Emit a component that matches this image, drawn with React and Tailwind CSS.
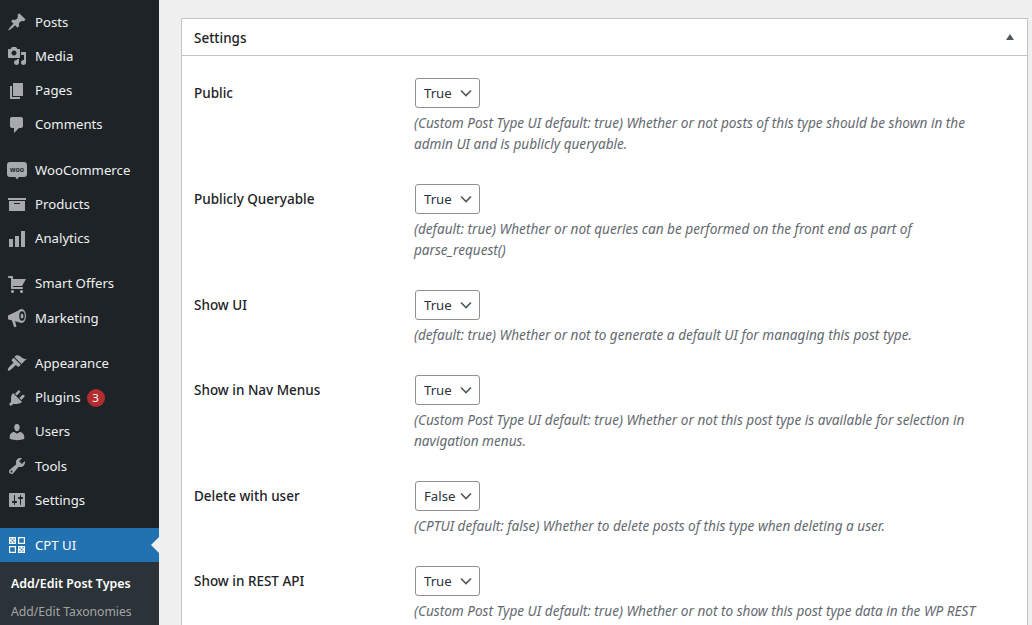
import React from "react";

const Dash = ({ d }) => (
  <svg viewBox="0 0 20 20" className="w-5 h-5 shrink-0 fill-[#a7aaad]">
    <path d={d} />
  </svg>
);

const WooIcon = () => (
  <svg viewBox="0 0 20 20" className="w-5 h-5 shrink-0">
    <path
      className="fill-[#a7aaad]"
      d="M2.800 2h14.400C18.800 2 20 3.200 20 4.800v9.400c0 1.600-1.200 2.800-2.800 2.800h-5.400L10 19.600 8.400 17H2.800C1.200 17 0 15.800 0 14.200V4.800C0 3.200 1.200 2 2.800 2z"
    />
    <text x="10" y="12" textAnchor="middle" fontSize="8" fontWeight="700" fill="#1d2327" fontFamily="Liberation Sans, sans-serif" textLength="14" lengthAdjust="spacingAndGlyphs">
      woo
    </text>
  </svg>
);

const MegaphoneIcon = () => (
  <svg viewBox="0 0 20 20" className="w-5 h-5 shrink-0">
    <path className="fill-[#a7aaad]" d="M1 7.500L13.500 1.500v13L8 13.300l1.500 5.200-2.300.7L4.800 12.300 2 11.800c-.7-.1-1-.6-1-1.200z" />
    <ellipse cx="14.500" cy="8" rx="4.500" ry="7" className="fill-[#a7aaad]" />
    <ellipse cx="15" cy="8" rx="2.800" ry="4.800" className="fill-[#1d2327]" />
    <ellipse cx="15" cy="8" rx="1.400" ry="2.600" className="fill-[#a7aaad]" />
  </svg>
);

const CptIcon = () => (
  <svg viewBox="0 0 20 20" className="w-5 h-5 shrink-0">
    <path className="fill-white" fillRule="evenodd" d="M2 2h7v7H2zM3.300 3.300v1.300h1.300V3.300zm3 0v1.300h1.400V3.300zM4.800 4.800v1.400h1.400V4.800zM3.300 6.400v1.300h1.300V6.400zm3 0v1.300h1.400V6.400z" />
    <path className="fill-white" fillRule="evenodd" d="M11 2h7v7h-7zm1.200 1.200v4.600h4.600V3.200z" />
    <path className="fill-white" fillRule="evenodd" d="M2 11h7v7H2zm1.200 1.200v4.600h4.600v-4.600z" />
    <path className="fill-white" fillRule="evenodd" d="M11 11h7v7h-7zm1.300 1.300v1.300h1.300v-1.300zm3 0v1.300h1.400v-1.300zm-1.500 1.500v1.400h1.400v-1.400zm-1.500 1.600v1.300h1.300v-1.300zm3 0v1.300h1.400v-1.300z" />
  </svg>
);

const paths = {
  posts: "M10.44 3.02l1.82-1.82 6.36 6.35-1.83 1.82c-1.05-.68-2.48-.57-3.41.36l-.75.75c-.92.93-1.04 2.35-.35 3.41l-1.83 1.82-2.41-2.41-2.8 2.79c-.42.42-3.38 2.71-3.8 2.29s1.86-3.39 2.28-3.81l2.79-2.79L4.100 9.360l1.830-1.820c1.050.69 2.480.57 3.400-.36l.75-.75c.93-.92 1.050-2.350.36-3.410z",
  media: "M13 11V4c0-.55-.45-1-1-1h-1.670L9 1H5L3.670 3H2c-.55 0-1 .45-1 1v7c0 .55.45 1 1 1h10c.55 0 1-.45 1-1zM7 4.500c1.380 0 2.500 1.120 2.500 2.500S8.380 9.500 7 9.500 4.500 8.380 4.500 7 5.620 4.500 7 4.500zM14 6h5v10.500c0 1.380-1.120 2.500-2.500 2.500S14 17.880 14 16.500s1.120-2.500 2.500-2.500c.17 0 .34.02.5.05V9h-3V6zm-4 8.050V13h2v3.500c0 1.380-1.120 2.500-2.500 2.500S7 17.880 7 16.500 8.120 14 9.500 14c.17 0 .34.02.5.05z",
  pages: "M6 15V2h10v13H6zm-1 1h8v2H3V5h2v11z",
  comments: "M5 2h9c1.100 0 2 .9 2 2v7c0 1.100-.9 2-2 2h-2l-5 5v-5H5c-1.100 0-2-.9-2-2V4c0-1.100.9-2 2-2z",
  products: "M19 4v2H1V4h18zM2 7h16v10H2V7zm11 3V9H7v1h6z",
  analytics: "M18 18V2h-4v16h4zm-6 0V7H8v11h4zm-6 0v-8H2v8h4z",
  cart: "M6 13h9c.55 0 1 .45 1 1s-.45 1-1 1H5c-.55 0-1-.45-1-1V4H2c-.55 0-1-.45-1-1s.45-1 1-1h3c.55 0 1 .45 1 1v2h13l-4 7H6v1zm-.5 3c.83 0 1.500.67 1.500 1.500S6.330 19 5.500 19 4 18.330 4 17.500 4.670 16 5.500 16zm9 0c.83 0 1.500.67 1.500 1.500s-.67 1.500-1.500 1.500-1.500-.67-1.500-1.500.67-1.500 1.500-1.500z",
  appearance: "M14.480 11.060L7.410 3.990l1.500-1.500c.5-.56 2.300-.47 3.510.32 1.210.8 1.430 1.280 2.910 2.100 1.180.64 2.450 1.260 4.450.85zm-.71.71L6.700 4.700 4.930 6.470c-.39.39-.39 1.020 0 1.410l1.060 1.060c.39.39.39 1.030 0 1.420-.6.6-6.480 5.610-4.970 7.110 1.500 1.510 6.510-4.370 7.110-4.970.39-.39 1.020-.39 1.410 0l1.060 1.060c.39.39 1.020.39 1.410 0z",
  plugins: "M13.110 4.360L9.870 7.600 8 5.730l3.240-3.240c.35-.34 1.050-.2 1.560.32.52.51.66 1.210.31 1.550zm-8 1.770l.91-1.120 9.010 9.010-1.190.84c-.71.71-2.630 1.160-3.820 1.160H6.140L4.900 17.260c-.59.59-1.540.59-2.120 0-.59-.58-.59-1.530 0-2.120l1.240-1.240v-3.880c0-1.130.4-3.190 1.090-3.890zm7.260 3.970l3.240-3.240c.34-.35 1.040-.21 1.550.31.52.51.66 1.210.31 1.550l-3.240 3.250z",
  users: "M10 9.250c-2.270 0-2.730-3.440-2.730-3.440C7 4.020 7.820 2 9.970 2c2.160 0 2.980 2.020 2.710 3.810 0 0-.41 3.440-2.680 3.440zm0 2.570L12.720 10c2.390 0 4.520 2.330 4.520 4.530v2.490s-3.650 1.130-7.240 1.130c-3.650 0-7.240-1.130-7.240-1.130v-2.490c0-2.250 1.940-4.480 4.470-4.480z",
  tools: "M16.680 9.770c-1.340 1.340-3.300 1.670-4.950.99l-5.410 6.520c-.99.99-2.590.99-3.580 0s-.99-2.590 0-3.570l6.520-5.420c-.68-1.650-.35-3.610.99-4.950 1.280-1.280 3.120-1.620 4.720-1.060l-2.890 2.890 2.820 2.820 2.860-2.870c.53 1.580.18 3.390-1.080 4.650zM3.810 16.210c.4.39 1.040.39 1.430 0 .4-.4.4-1.040 0-1.430-.39-.4-1.030-.4-1.430 0-.39.39-.39 1.030 0 1.430z",
  settings: "M18 16V4c0-.55-.45-1-1-1H3c-.55 0-1 .45-1 1v12c0 .55.45 1 1 1h14c.55 0 1-.45 1-1zM8 11h1c.55 0 1 .45 1 1s-.45 1-1 1H8v1.500c0 .28-.22.5-.5.5s-.5-.22-.5-.5V13H6c-.55 0-1-.45-1-1s.45-1 1-1h1V5.500c0-.28.22-.5.5-.5s.5.22.5.5V11zm5-2h-1c-.55 0-1-.45-1-1s.45-1 1-1h1V5.500c0-.28.22-.5.5-.5s.5.22.5.5V7h1c.55 0 1 .45 1 1s-.45 1-1 1h-1v5.500c0 .28-.22.5-.5.5s-.5-.22-.5-.5V9z",
};

const menuGroups = [
  [
    { label: "Posts", icon: <Dash d={paths.posts} /> },
    { label: "Media", icon: <Dash d={paths.media} /> },
    { label: "Pages", icon: <Dash d={paths.pages} /> },
    { label: "Comments", icon: <Dash d={paths.comments} /> },
  ],
  [
    { label: "WooCommerce", icon: <WooIcon /> },
    { label: "Products", icon: <Dash d={paths.products} /> },
    { label: "Analytics", icon: <Dash d={paths.analytics} /> },
  ],
  [
    { label: "Smart Offers", icon: <Dash d={paths.cart} /> },
    { label: "Marketing", icon: <MegaphoneIcon /> },
  ],
  [
    { label: "Appearance", icon: <Dash d={paths.appearance} /> },
    { label: "Plugins", icon: <Dash d={paths.plugins} />, badge: "3" },
    { label: "Users", icon: <Dash d={paths.users} /> },
    { label: "Tools", icon: <Dash d={paths.tools} /> },
    { label: "Settings", icon: <Dash d={paths.settings} /> },
  ],
];

const rows = [
  {
    label: "Public",
    value: "True",
    desc: "(Custom Post Type UI default: true) Whether or not posts of this type should be shown in the admin UI and is publicly queryable.",
  },
  {
    label: "Publicly Queryable",
    value: "True",
    desc: "(default: true) Whether or not queries can be performed on the front end as part of parse_request()",
  },
  {
    label: "Show UI",
    value: "True",
    desc: "(default: true) Whether or not to generate a default UI for managing this post type.",
  },
  {
    label: "Show in Nav Menus",
    value: "True",
    desc: "(Custom Post Type UI default: true) Whether or not this post type is available for selection in navigation menus.",
  },
  {
    label: "Delete with user",
    value: "False",
    desc: "(CPTUI default: false) Whether to delete posts of this type when deleting a user.",
  },
  {
    label: "Show in REST API",
    value: "True",
    desc: "(Custom Post Type UI default: true) Whether or not to show this post type data in the WP REST API.",
  },
];

const MenuItem = ({ item }) => (
  <div className="h-[34.250px] flex items-center pl-[7px] text-[#f0f0f1] text-[13.200px]">
    <div className="w-7 shrink-0 flex">{item.icon}</div>
    <span className="pt-px">{item.label}</span>
    {item.badge && (
      <span className="ml-[6px] w-[18px] h-[18px] rounded-full bg-[#b32d2e] text-white text-[11.500px] flex items-center justify-center">
        {item.badge}
      </span>
    )}
  </div>
);

const SettingRow = ({ row }) => (
  <div className="flex px-3 py-[15px]">
    <div className="w-[221px] shrink-0 pt-[5px] font-medium text-[#1d2327]">{row.label}</div>
    <div className="flex-1">
      <div className="w-[65px] h-[30px] border border-[#8c8f94] rounded-[3px] bg-white flex items-center justify-between pl-2 pr-[7px] text-[#2c3338] text-[13.200px]">
        <span className="pt-px">{row.value}</span>
        <svg viewBox="0 0 12 8" className="w-3 h-2 fill-none stroke-[#50575e] stroke-[1.600]">
          <path d="M1 1.500l5 5 5-5" />
        </svg>
      </div>
      <p className="mt-1 -ml-px text-[13.600px] text-[#646970] italic leading-[21px] w-[580px]">{row.desc}</p>
    </div>
  </div>
);

export default function App() {
  return (
    <div className="h-[625px] overflow-hidden flex bg-[#f0f0f1] text-[13.500px] font-['Noto_Sans',sans-serif]">
      <aside className="w-[159px] shrink-0 bg-[#1d2327] pt-[4.900px]">
        {menuGroups.map((group, i) => (
          <div key={i} className="mb-[11px]">
            {group.map((item) => (
              <MenuItem key={item.label} item={item} />
            ))}
          </div>
        ))}
        <div className="relative h-[34px] bg-[#2271b1] text-white flex items-center pl-[7px] text-[13.200px]">
          <div className="w-7 shrink-0 flex">
            <CptIcon />
          </div>
          <span className="pt-px">CPT UI</span>
          <span className="absolute right-0 top-[9px] border-y-[8px] border-r-[8px] border-y-transparent border-r-[#f0f0f1]" />
        </div>
        <div className="bg-[#2c3338] pt-2 h-[70px]">
          <div className="px-[11px] h-[28px] flex items-center text-white font-semibold text-[12.400px]">Add/Edit Post Types</div>
          <div className="px-[11px] h-[28px] flex items-center text-[#c3c4c7]/80 text-[12.200px]">Add/Edit Taxonomies</div>
        </div>
      </aside>
      <main className="flex-1 pl-[22px] pr-1 pt-[18px]">
        <section className="bg-white border border-[#c3c4c7]">
          <div className="h-[37px] border-b border-[#c3c4c7] flex items-center justify-between pl-3 pr-[13px]">
            <h2 className="font-medium text-[#1d2327] pt-[2px]">Settings</h2>
            <span className="border-x-[4px] border-b-[6px] border-x-transparent border-b-[#50575e]" />
          </div>
          <div className="pt-[7px]">
            {rows.map((row) => (
              <SettingRow key={row.label} row={row} />
            ))}
          </div>
        </section>
      </main>
    </div>
  );
}
